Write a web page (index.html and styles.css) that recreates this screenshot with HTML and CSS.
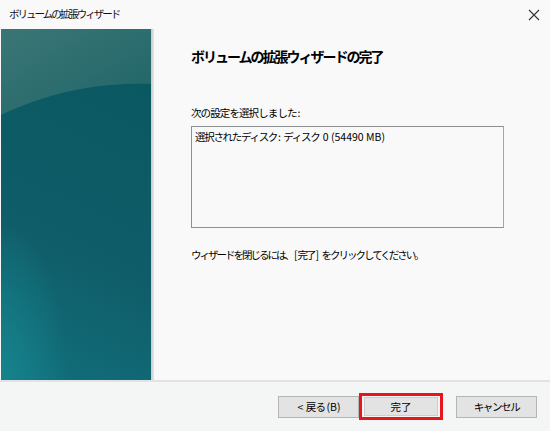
FILE: index.html
```html
<!DOCTYPE html>
<html lang="ja">
<head>
<meta charset="utf-8">
<title>ボリュームの拡張ウィザード</title>
<link rel="stylesheet" href="styles.css">
</head>
<body>
<div class="window">
  <div class="titlebar">
    <span class="title">ボリュームの拡張ウィザード</span>
    <span class="close">
      <svg width="12" height="12" viewBox="0 0 12 12"><path d="M1 1 L11 11 M11 1 L1 11" stroke="#333" stroke-width="1.1" fill="none"/></svg>
    </span>
  </div>
  <div class="main">
    <div class="side">
      <svg class="art" width="150" height="351" viewBox="0 0 150 351" preserveAspectRatio="none">
        <defs>
          <linearGradient id="top" x1="0" y1="0" x2="1" y2="1">
            <stop offset="0" stop-color="#3b7676"/>
            <stop offset="1" stop-color="#1f6568"/>
          </linearGradient>
          <linearGradient id="low" x1="0.2" y1="0" x2="0" y2="1">
            <stop offset="0" stop-color="#0a5860"/>
            <stop offset="0.55" stop-color="#0f5d69"/>
            <stop offset="1" stop-color="#11707c"/>
          </linearGradient>
          <radialGradient id="glow" cx="0" cy="1" r="0.45">
            <stop offset="0" stop-color="#17868f" stop-opacity="0.9"/>
            <stop offset="1" stop-color="#17868f" stop-opacity="0"/>
          </radialGradient>
        </defs>
        <rect width="150" height="351" fill="url(#low)"/>
        <rect width="150" height="351" fill="url(#glow)"/>
        <path d="M0 0 H150 V55 C110 54 60 58 0 86 Z" fill="url(#top)"/>
      </svg>
    </div>
    <div class="shadow"></div>
    <div class="content">
      <h1 class="heading">ボリュームの拡張ウィザードの完了</h1>
      <p class="label">次の設定を選択しました<span class="lat">:</span></p>
      <div class="box">選択されたディスク<span class="lat">: </span>ディスク<span class="lat"> 0 (54490 MB)</span></div>
      <p class="note">ウィザードを閉じるには、<span class="lat">[</span>完了<span class="lat">] </span>をクリックしてください。</p>
    </div>
  </div>
  <div class="footer">
    <button class="btn btn-back"><span class="lat">&lt; </span>戻る<span class="lat">(B)</span></button>
    <span class="highlight"><button class="btn btn-finish">完了</button></span>
    <button class="btn btn-cancel">キャンセル</button>
  </div>
</div>
</body>
</html>
```
FILE: styles.css
```css
html, body {
  margin: 0;
  padding: 0;
  background: #f9f9f9;
}
body {
  font-family: "Noto Sans CJK JP", "Noto Sans", sans-serif;
  font-size: 10.5px;
  color: #000;
}
.window {
  width: 550px;
  height: 431px;
  display: flex;
  flex-direction: column;
  background: #f9f9f9;
  overflow: hidden;
}
.lat {
  letter-spacing: 0;
  padding-left: 1px;
}
.titlebar {
  height: 29px;
  display: flex;
  align-items: center;
  justify-content: space-between;
  padding: 0 10px 0 9px;
  flex: none;
}
.title {
  font-size: 10.5px;
  letter-spacing: -2px;
  color: #111;
  line-height: 1;
}
.close {
  display: flex;
  width: 12px;
  height: 12px;
}
.main {
  display: flex;
  height: 351px;
  flex: none;
}
.side {
  width: 150px;
  height: 351px;
  margin-left: 1px;
  flex: none;
}
.art {
  display: block;
}
.shadow {
  width: 3px;
  flex: none;
  background: linear-gradient(to right, #c9cccc, #e4e6e6);
}
.content {
  flex: 1;
  padding-left: 37px;
  display: flex;
  flex-direction: column;
}
.heading {
  margin: 17px 0 0;
  font-size: 14px;
  letter-spacing: -2px;
  font-weight: bold;
  color: #000;
  line-height: 20px;
}
.label {
  margin: 39px 0 0;
  line-height: 16px;
  letter-spacing: -0.9px;
}
.box {
  margin-top: 5px;
  width: 304px;
  height: 94px;
  border: 1px solid #8e9194;
  border-right-color: #a3a7aa;
  background: #f9f9f9;
  padding: 3px 4px 3px 3px;
  line-height: 14px;
  letter-spacing: -1.3px;
  box-sizing: content-box;
}
.note {
  margin: 19px 0 0;
  letter-spacing: -2px;
  line-height: 16px;
}
.footer {
  flex: 1;
  border-top: 2px solid #e2e4e4;
  background: #f4f5f5;
  display: flex;
  align-items: center;
  justify-content: flex-end;
  padding: 0 13px 0 0;
}
.btn {
  width: 81px;
  height: 22px;
  border: 1px solid #b5b5b5;
  background: #e3e3e3;
  font-family: "Noto Sans CJK JP", "Noto Sans", sans-serif;
  font-size: 10.5px;
  color: #000;
  padding: 0;
  margin: 0;
  line-height: 18px;
}
.btn-back {
  letter-spacing: -0.6px;
}
.btn-cancel {
  letter-spacing: -1.4px;
}
.highlight {
  display: flex;
  align-items: center;
  justify-content: center;
  width: 78px;
  height: 21px;
  border: 3px solid #e8141e;
  margin-right: 13px;
}
.btn-finish {
  width: 74px;
  height: 19px;
  border: 1px solid #cdcdcd;
  letter-spacing: 0;
}
```
